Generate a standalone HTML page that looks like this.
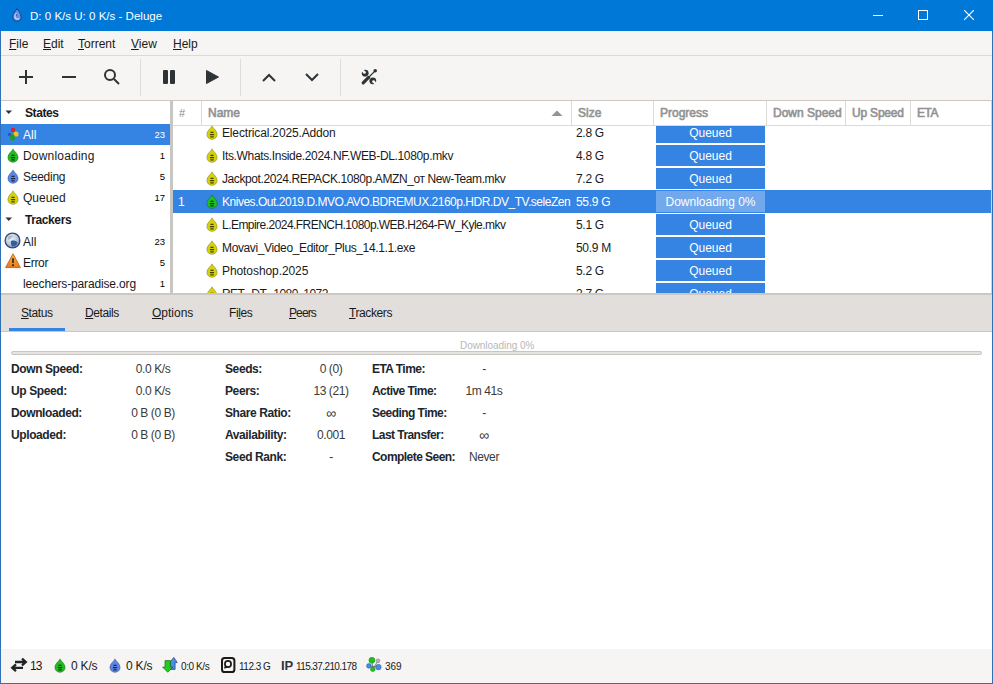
<!DOCTYPE html>
<html><head><meta charset="utf-8">
<style>
*{box-sizing:border-box;margin:0;padding:0}
html,body{width:993px;height:684px;overflow:hidden;background:#3070b4}
body{font-family:"Liberation Sans",sans-serif;font-size:12px;color:#1a1a1a;position:relative}
.a{position:absolute}
.t{position:absolute;white-space:nowrap;line-height:14px}
.ul{text-decoration:underline;text-underline-offset:1px}
.hd{position:absolute;top:105px;font-weight:normal;-webkit-text-stroke:0.6px #929292;color:#929292;white-space:nowrap;line-height:14px}
.sep{position:absolute;top:101px;width:1px;height:25px;background:#dcdad5}
.nm{position:absolute;left:49px;white-space:nowrap;line-height:14px;width:349px;overflow:hidden}
.sz{position:absolute;left:403px;white-space:nowrap;line-height:14px;letter-spacing:-0.3px}
.pb{position:absolute;left:483px;width:109px;height:21px;background:#3584e4;color:#fff;text-align:center;line-height:22px}
.ic{position:absolute;left:33px}
.lb{position:absolute;font-weight:bold;white-space:nowrap;line-height:14px;color:#20262e;letter-spacing:-0.4px}
.vl{position:absolute;white-space:nowrap;line-height:14px;text-align:center;width:100px;color:#3a3a3a;letter-spacing:-0.4px}
</style></head><body>
<svg width="0" height="0" style="position:absolute">
 <defs>
  <symbol id="drop" viewBox="0 0 12 15">
   <path d="M6 0.8C5.2 2.9 0.8 5.7 0.8 9.5A5.2 4.9 0 0 0 11.2 9.5C11.2 5.7 6.8 2.9 6 0.8Z" fill="currentColor" stroke="rgba(0,0,0,0.28)" stroke-width="0.8"/>
   <path d="M4.5 7.3H7.5M3.9 9.6H8.1M4.3 11.9H7.7" stroke="rgba(0,0,0,0.7)" stroke-width="1.2"/>
  </symbol>
 </defs>
</svg>
<!-- title bar -->
<div class="a" style="left:0;top:0;width:993px;height:31px;background:#0078d7"></div>
<svg class="a" style="left:12px;top:8px" width="10" height="14" viewBox="0 0 10 14"><path d="M5 0.6C4 2.6 0.8 5.6 0.8 8.9A4.2 4.2 0 0 0 9.2 8.9C9.2 5.6 6 2.6 5 0.6Z" fill="#6495e6" stroke="#1b3c8c" stroke-width="1"/><path d="M5.8 5.6A2.8 2.8 0 1 0 7.4 10.6" fill="none" stroke="#c9dafc" stroke-width="1.3"/><path d="M5.9 5.7A2 2 0 0 0 4.2 8.2" fill="none" stroke="#1b3c8c" stroke-width="0.8"/></svg>
<div class="t" style="left:30px;top:9px;color:#fff;font-size:11.55px">D: 0 K/s U: 0 K/s - Deluge</div>
<div class="a" style="left:873px;top:15px;width:10px;height:1px;background:#fff"></div>
<div class="a" style="left:918px;top:10px;width:10px;height:10px;border:1px solid #fff"></div>
<svg class="a" style="left:964px;top:10px" width="10" height="10" viewBox="0 0 10 10"><path d="M0 0L10 10M10 0L0 10" stroke="#fff" stroke-width="1.1"/></svg>

<!-- window body -->
<div class="a" style="left:1px;top:31px;width:991px;height:652px;background:#f6f5f4"></div>

<!-- menu -->
<div class="t" style="left:9px;top:37px"><span class="ul">F</span>ile</div>
<div class="t" style="left:43px;top:37px"><span class="ul">E</span>dit</div>
<div class="t" style="left:78px;top:37px"><span class="ul">T</span>orrent</div>
<div class="t" style="left:131px;top:37px"><span class="ul">V</span>iew</div>
<div class="t" style="left:173px;top:37px"><span class="ul">H</span>elp</div>
<div class="a" style="left:1px;top:55px;width:991px;height:1px;background:#dcdad5"></div>

<!-- toolbar -->
<svg class="a" style="left:0;top:56px" width="400" height="44" viewBox="0 0 400 44">
 <g stroke="#2e3436" stroke-width="2" fill="none">
  <path d="M19 21H33M26 14V28"/>
  <path d="M62 21H76"/>
  <circle cx="110" cy="19" r="5"/><path d="M114 23L119 28"/>
 </g>
 <rect x="163" y="14" width="5" height="14" rx="1" fill="#2e3436"/><rect x="170" y="14" width="5" height="14" rx="1" fill="#2e3436"/>
 <path d="M206.5 14.5L218.5 21L206.5 27.5Z" fill="#2e3436" stroke="#2e3436" stroke-width="1" stroke-linejoin="round"/>
 <g stroke="#2e3436" stroke-width="2" fill="none">
  <path d="M263 25L269 19L275 25"/>
  <path d="M306 18L312 24L318 18"/>
 </g>
 <g transform="translate(361,13)">
  <path d="M4 4L12 12" stroke="#2e3436" stroke-width="2.4"/>
  <circle cx="4.2" cy="4.2" r="3.4" fill="#2e3436"/>
  <circle cx="11.8" cy="11.8" r="3.4" fill="#2e3436"/>
  <circle cx="3.6" cy="3.6" r="1.25" fill="#f6f5f4"/>
  <circle cx="12.4" cy="12.4" r="1.25" fill="#f6f5f4"/>
  <path d="M4.48 2.72L1.02 -0.74L-0.74 1.02L2.72 4.48Z" fill="#f6f5f4"/>
  <path d="M13.28 11.52L16.74 14.98L14.98 16.74L11.52 13.28Z" fill="#f6f5f4"/>
  <path d="M14.2 1.8L8 8M7.6 8.4L2.2 13.8" stroke="#f6f5f4" stroke-width="4" stroke-linecap="round"/>
  <circle cx="14.2" cy="1.8" r="1.8" fill="#2e3436"/>
  <path d="M14 2L7.5 8.5" stroke="#2e3436" stroke-width="1.1"/>
  <path d="M7.6 8.4L2.2 13.8" stroke="#2e3436" stroke-width="3.2" stroke-linecap="round"/>
 </g>
 <rect x="140" y="3" width="1" height="37" fill="#dfddd9"/>
 <rect x="240" y="3" width="1" height="37" fill="#dfddd9"/>
 <rect x="340" y="3" width="1" height="37" fill="#dfddd9"/>
</svg>
<div class="a" style="left:1px;top:100px;width:991px;height:1px;background:#cdc7c2"></div>

<!-- sidebar -->
<div class="a" style="left:1px;top:101px;width:169px;height:192px;background:#fff"></div>
<div class="a" style="left:170px;top:101px;width:3px;height:192px;background:#c8c6c3"></div>
<div class="a" style="left:1px;top:124px;width:169px;height:21px;background:#3584e4"></div>
<svg class="a" style="left:5px;top:110px" width="8" height="5"><path d="M0.5 0.5L7 0.5L3.75 4Z" fill="#333"/></svg>
<div class="t" style="left:25px;top:106px;font-weight:bold;letter-spacing:-0.4px">States</div>
<svg class="a" style="left:7px;top:127px" width="12" height="14" viewBox="0 0 12 14">
 <circle cx="6" cy="3" r="2.2" fill="#e02020"/>
 <circle cx="9" cy="7" r="2.6" fill="#e8c820"/>
 <circle cx="2.5" cy="7.5" r="1.8" fill="#3050d0"/>
 <ellipse cx="5.5" cy="10.5" rx="2.4" ry="3.2" fill="#20a020"/>
</svg>
<div class="t" style="left:23px;top:128px;color:#fff">All</div>
<div class="t" style="left:135px;width:30px;text-align:right;top:128px;font-size:9.5px;color:#fff">23</div>
<svg class="ic" style="left:7px;top:148px;color:#1fbf1f" width="12" height="15"><use href="#drop"/></svg>
<div class="t" style="left:23px;top:149px;letter-spacing:0.2px">Downloading</div>
<div class="t" style="left:135px;width:30px;text-align:right;top:149px;font-size:9.5px;color:#000">1</div>
<svg class="ic" style="left:7px;top:169px;color:#5b86e6" width="12" height="15"><use href="#drop"/></svg>
<div class="t" style="left:23px;top:170px;letter-spacing:-0.25px">Seeding</div>
<div class="t" style="left:135px;width:30px;text-align:right;top:170px;font-size:9.5px;color:#000">5</div>
<svg class="ic" style="left:7px;top:190px;color:#d6d20a" width="12" height="15"><use href="#drop"/></svg>
<div class="t" style="left:23px;top:191px">Queued</div>
<div class="t" style="left:135px;width:30px;text-align:right;top:191px;font-size:9.5px;color:#000">17</div>
<svg class="a" style="left:5px;top:217px" width="8" height="5"><path d="M0.5 0.5L7 0.5L3.75 4Z" fill="#333"/></svg>
<div class="t" style="left:25px;top:213px;font-weight:bold;letter-spacing:-0.4px">Trackers</div>
<svg class="a" style="left:4px;top:232px" width="17" height="17" viewBox="0 0 17 17">
 <defs><radialGradient id="gl" cx="0.4" cy="0.35" r="0.7"><stop offset="0" stop-color="#f2f5f8"/><stop offset="0.6" stop-color="#b9c8d8"/><stop offset="1" stop-color="#6f86a8"/></radialGradient></defs>
 <circle cx="8.5" cy="8.5" r="7.4" fill="url(#gl)" stroke="#34457a" stroke-width="1.3"/>
 <path d="M7 9C9 8 12 8.5 13.5 10.5C13 13 11 14.5 8.5 14.8C7 13.5 6.5 11 7 9Z" fill="#2f5f9c"/>
 <path d="M4 5C5.5 3.5 8 3 9 4.5C8 6 6 6.5 5 8C4 7.5 3.5 6.5 4 5Z" fill="#a8bcc8"/>
</svg>
<div class="t" style="left:23px;top:235px">All</div>
<div class="t" style="left:135px;width:30px;text-align:right;top:235px;font-size:9.5px;color:#000">23</div>
<svg class="a" style="left:5px;top:253px" width="17" height="16" viewBox="0 0 17 16">
 <defs><linearGradient id="wg" x1="0" y1="0" x2="0" y2="1"><stop offset="0" stop-color="#f7b548"/><stop offset="1" stop-color="#e9761a"/></linearGradient></defs>
 <path d="M8 0.8L15.4 14.6H0.6Z" fill="url(#wg)" stroke="#d06a12" stroke-width="1" stroke-linejoin="round"/>
 <path d="M8 5.2V10" stroke="#3a3020" stroke-width="1.8"/><rect x="7" y="11.3" width="2" height="1.8" fill="#3a3020"/>
</svg>
<div class="t" style="left:23px;top:256px;letter-spacing:-0.3px">Error</div>
<div class="t" style="left:135px;width:30px;text-align:right;top:256px;font-size:9.5px;color:#000">5</div>
<div class="t" style="left:23px;top:277px;letter-spacing:-0.15px">leechers-paradise.org</div>
<div class="t" style="left:135px;width:30px;text-align:right;top:277px;font-size:9.5px;color:#000">1</div>

<!-- torrent list -->
<div class="a" style="left:173px;top:101px;width:818px;height:192px;background:#fff;overflow:hidden">
 <div class="a" style="left:0;top:89px;width:819px;height:23px;background:#3584e4"></div>
 <div class="nm" style="top:25px;letter-spacing:-0.15px">Electrical.2025.Addon</div>
 <div class="nm" style="top:48px;letter-spacing:-0.35px">Its.Whats.Inside.2024.NF.WEB-DL.1080p.mkv</div>
 <div class="nm" style="top:71px;letter-spacing:-0.4px">Jackpot.2024.REPACK.1080p.AMZN_от New-Team.mkv</div>
 <div class="t" style="left:5px;top:94px;color:#fff">1</div>
 <div class="nm" style="top:94px;color:#fff;letter-spacing:-0.48px">Knives.Out.2019.D.MVO.AVO.BDREMUX.2160p.HDR.DV_TV.seleZen</div>
 <div class="nm" style="top:117px;letter-spacing:-0.54px">L.Empire.2024.FRENCH.1080p.WEB.H264-FW_Kyle.mkv</div>
 <div class="nm" style="top:140px;letter-spacing:-0.37px">Movavi_Video_Editor_Plus_14.1.1.exe</div>
 <div class="nm" style="top:163px;letter-spacing:-0.08px">Photoshop.2025</div>
 <div class="nm" style="top:186px;letter-spacing:-0.55px">RET...DT...1080..1072</div>
 <div class="sz" style="top:25px">2.8 G</div>
 <div class="sz" style="top:48px">4.8 G</div>
 <div class="sz" style="top:71px">7.2 G</div>
 <div class="sz" style="top:94px;color:#fff">55.9 G</div>
 <div class="sz" style="top:117px">5.1 G</div>
 <div class="sz" style="top:140px">50.9 M</div>
 <div class="sz" style="top:163px">5.2 G</div>
 <div class="sz" style="top:186px">2.7 G</div>
 <div class="pb" style="top:21px">Queued</div>
 <div class="pb" style="top:44px">Queued</div>
 <div class="pb" style="top:67px">Queued</div>
 <div class="pb" style="top:90px;background:#72a8ec">Downloading 0%</div>
 <div class="pb" style="top:113px">Queued</div>
 <div class="pb" style="top:136px">Queued</div>
 <div class="pb" style="top:159px">Queued</div>
 <div class="pb" style="top:182px">Queued</div>
 <svg class="ic" style="top:24px;color:#d6d20a" width="12" height="15"><use href="#drop"/></svg>
 <svg class="ic" style="top:47px;color:#d6d20a" width="12" height="15"><use href="#drop"/></svg>
 <svg class="ic" style="top:70px;color:#d6d20a" width="12" height="15"><use href="#drop"/></svg>
 <svg class="ic" style="top:93px;color:#1fbf1f" width="12" height="15"><use href="#drop"/></svg>
 <svg class="ic" style="top:116px;color:#d6d20a" width="12" height="15"><use href="#drop"/></svg>
 <svg class="ic" style="top:139px;color:#d6d20a" width="12" height="15"><use href="#drop"/></svg>
 <svg class="ic" style="top:162px;color:#d6d20a" width="12" height="15"><use href="#drop"/></svg>
 <svg class="ic" style="top:185px;color:#d6d20a" width="12" height="15"><use href="#drop"/></svg>
 <!-- header -->
 <div class="a" style="left:0;top:0;width:819px;height:25px;background:#fff;border-bottom:1px solid #dcdad5"></div>
 <div class="t" style="left:6px;top:5px;color:#8a8a8a;font-size:11px">#</div>
 <div class="hd" style="left:35px;top:5px">Name</div>
 <svg class="a" style="left:378px;top:9px" width="12" height="7"><path d="M0.5 6L6 0.5L11.5 6Z" fill="#949494"/></svg>
 <div class="hd" style="left:405px;top:5px">Size</div>
 <div class="hd" style="left:487px;top:5px">Progress</div>
 <div class="hd" style="left:600px;top:5px;letter-spacing:0px">Down Speed</div>
 <div class="hd" style="left:679px;top:5px;letter-spacing:-0.2px">Up Speed</div>
 <div class="hd" style="left:744px;top:5px;letter-spacing:-0.5px">ETA</div>
 <div class="sep" style="left:28px;top:0"></div>
 <div class="sep" style="left:398px;top:0"></div>
 <div class="sep" style="left:480px;top:0"></div>
 <div class="sep" style="left:593px;top:0"></div>
 <div class="sep" style="left:672px;top:0"></div>
 <div class="sep" style="left:737px;top:0"></div>
</div>

<div class="a" style="left:991px;top:101px;width:1px;height:192px;background:#d6d3cf"></div>
<!-- tabs -->
<div class="a" style="left:1px;top:293px;width:991px;height:2px;background:#cbc8c4"></div>
<div class="a" style="left:1px;top:295px;width:991px;height:37px;background:#e1dedb;border-bottom:1px solid #cdc7c2"></div>
<div class="a" style="left:9px;top:328px;width:56px;height:3px;background:#3584e4"></div>
<div class="t" style="left:21px;top:306px;letter-spacing:-0.4px"><span class="ul">S</span>tatus</div>
<div class="t" style="left:85px;top:306px;letter-spacing:-0.4px"><span class="ul">D</span>etails</div>
<div class="t" style="left:152px;top:306px;letter-spacing:0px"><span class="ul">O</span>ptions</div>
<div class="t" style="left:229px;top:306px;letter-spacing:-0.4px">Fi<span class="ul">l</span>es</div>
<div class="t" style="left:289px;top:306px;letter-spacing:-0.9px"><span class="ul">P</span>eers</div>
<div class="t" style="left:349px;top:306px;letter-spacing:-0.4px"><span class="ul">T</span>rackers</div>

<!-- status content -->
<div class="a" style="left:1px;top:332px;width:991px;height:317px;background:#fff"></div>
<div class="t" style="left:460px;top:339px;font-size:10px;color:#b8b8b8;letter-spacing:-0.05px">Downloading 0%</div>
<div class="a" style="left:11px;top:351px;width:971px;height:4px;background:#e6e4e2;border:1px solid #c9c6c2;border-radius:2px"></div>

<div class="lb" style="left:11px;top:362px">Down Speed:</div>
<div class="lb" style="left:11px;top:384px">Up Speed:</div>
<div class="lb" style="left:11px;top:406px">Downloaded:</div>
<div class="lb" style="left:11px;top:428px">Uploaded:</div>
<div class="vl" style="left:103px;top:362px">0.0 K/s</div>
<div class="vl" style="left:103px;top:384px">0.0 K/s</div>
<div class="vl" style="left:103px;top:406px">0 B (0 B)</div>
<div class="vl" style="left:103px;top:428px">0 B (0 B)</div>

<div class="lb" style="left:225px;top:362px">Seeds:</div>
<div class="lb" style="left:225px;top:384px">Peers:</div>
<div class="lb" style="left:225px;top:406px">Share Ratio:</div>
<div class="lb" style="left:225px;top:428px">Availability:</div>
<div class="lb" style="left:225px;top:450px">Seed Rank:</div>
<div class="vl" style="left:281px;top:362px">0 (0)</div>
<div class="vl" style="left:281px;top:384px">13 (21)</div>
<div class="vl" style="left:281px;top:406px;font-size:14px;letter-spacing:0">∞</div>
<div class="vl" style="left:281px;top:428px">0.001</div>
<div class="vl" style="left:281px;top:450px">-</div>

<div class="lb" style="left:372px;top:362px;letter-spacing:-0.55px">ETA Time:</div>
<div class="lb" style="left:372px;top:384px;letter-spacing:-0.55px">Active Time:</div>
<div class="lb" style="left:372px;top:406px;letter-spacing:-0.55px">Seeding Time:</div>
<div class="lb" style="left:372px;top:428px;letter-spacing:-0.55px">Last Transfer:</div>
<div class="lb" style="left:372px;top:450px;letter-spacing:-0.55px">Complete Seen:</div>
<div class="vl" style="left:434px;top:362px">-</div>
<div class="vl" style="left:434px;top:384px">1m 41s</div>
<div class="vl" style="left:434px;top:406px">-</div>
<div class="vl" style="left:434px;top:428px;font-size:14px;letter-spacing:0">∞</div>
<div class="vl" style="left:434px;top:450px">Never</div>

<!-- statusbar -->
<div class="a" style="left:1px;top:649px;width:991px;height:34px;background:#f6f5f4"></div>
<svg class="a" style="left:10px;top:657px" width="18" height="16" viewBox="0 0 18 16">
 <g stroke="#1f2326" stroke-width="2.3" fill="none" stroke-linecap="butt" stroke-linejoin="miter"><path d="M5 5H15.5M12 1.6L15.8 5L12 8.4"/><path d="M13 10.8H2.5M6 7.4L2.2 10.8L6 14.2"/></g>
</svg>
<div class="t" style="left:30px;top:659px;letter-spacing:-0.8px">13</div>
<svg class="a" style="left:54px;top:658px;color:#1fbf1f" width="12" height="15"><use href="#drop"/></svg>
<div class="t" style="left:71px;top:659px;letter-spacing:-0.2px">0 K/s</div>
<svg class="a" style="left:109px;top:658px;color:#5b86e6" width="12" height="15"><use href="#drop"/></svg>
<div class="t" style="left:126px;top:659px;letter-spacing:-0.2px">0 K/s</div>
<svg class="a" style="left:162px;top:657px" width="17" height="16" viewBox="0 0 17 16">
 <path d="M11.8 0.4L15.3 5.6H13.1V12.4H8.5V5.6H7.6Z" fill="#4a8ee6" stroke="#1d3f7a" stroke-width="0.7" stroke-linejoin="round"/>
 <path d="M3 3.6H8.4V10.1H11L5.7 15.2L0.6 10.1H3Z" fill="#22cc22" stroke="#156615" stroke-width="0.7" stroke-linejoin="round"/>
</svg>
<div class="t" style="left:181px;top:660px;font-size:10px;letter-spacing:-0.4px">0:0 K/s</div>
<svg class="a" style="left:221px;top:657px" width="15" height="16" viewBox="0 0 15 16">
 <rect x="1" y="1" width="12.4" height="14" rx="2.6" fill="none" stroke="#1a1a1a" stroke-width="2"/>
 <circle cx="7" cy="7" r="3.1" fill="none" stroke="#1a1a1a" stroke-width="1.7"/>
 <path d="M4.6 8.6L3.6 11.2L6.4 10.1" fill="#1a1a1a" stroke="#1a1a1a" stroke-width="1"/>
</svg>
<div class="t" style="left:239px;top:660px;font-size:10px;letter-spacing:-0.5px">112.3 G</div>
<div class="t" style="left:281px;top:659px;font-weight:bold;font-size:13px;color:#2e3440">IP</div>
<div class="t" style="left:296px;top:660px;font-size:10px;letter-spacing:-0.6px">115.37.210.178</div>
<svg class="a" style="left:366px;top:657px" width="16" height="16" viewBox="0 0 16 16">
 <path d="M5.9 3.2L6.7 12.2M2.8 8.9L12.4 10.1M12 3.8L6.7 12.2" stroke="#555" stroke-width="0.7"/>
 <circle cx="12" cy="3.8" r="1.9" fill="#b8b0b8" stroke="#777" stroke-width="0.5"/>
 <circle cx="5.9" cy="3.3" r="3" fill="#1ec01e" stroke="#138a13" stroke-width="0.5"/>
 <circle cx="2.9" cy="8.9" r="2.4" fill="#4a8ae0" stroke="#2a5aa0" stroke-width="0.5"/>
 <circle cx="12.4" cy="10.1" r="2.8" fill="#4a8ae0" stroke="#2a5aa0" stroke-width="0.5"/>
 <circle cx="6.8" cy="12.3" r="2.3" fill="#1ec01e" stroke="#138a13" stroke-width="0.5"/>
</svg>
<div class="t" style="left:385px;top:660px;font-size:10px">369</div>
</body></html>
